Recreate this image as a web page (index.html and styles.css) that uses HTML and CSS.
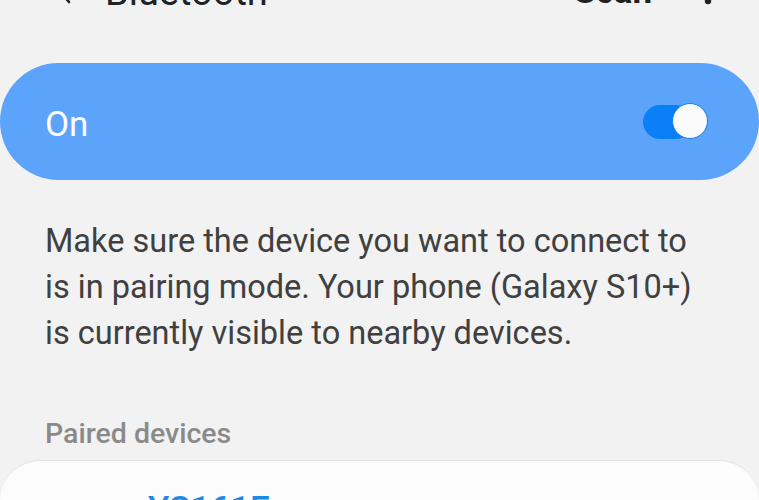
FILE: index.html
```html
<!DOCTYPE html>
<html lang="en">
<head>
    <meta charset="UTF-8">
    <meta name="viewport" content="width=device-width, initial-scale=1.0">
    <title>Bluetooth</title>
    <link rel="stylesheet" href="styles.css">
</head>
<body>
    <div class="topbar">
        <svg class="back" width="20" height="30" viewBox="0 0 20 30">
            <path d="M15 2 L4 15 L15 28" fill="none" stroke="#222" stroke-width="2.6" stroke-linecap="round" stroke-linejoin="round"/>
        </svg>
        <span class="title">Bluetooth</span>
        <span class="spacer"></span>
        <span class="scan">Scan</span>
        <svg class="more" width="8" height="32" viewBox="0 0 8 32">
            <circle cx="4" cy="4" r="3.2" fill="#222"/>
            <circle cx="4" cy="16" r="3.2" fill="#222"/>
            <circle cx="4" cy="28" r="3.2" fill="#222"/>
        </svg>
    </div>

    <div class="master">
        <span class="master-label">On</span>
        <div class="switch">
            <div class="track"></div>
            <div class="knob"></div>
        </div>
    </div>

    <p class="hint">Make sure the device you want to connect to<br>is in pairing mode. Your phone (Galaxy S10+)<br>is currently visible to nearby devices.</p>

    <h3 class="section">Paired devices</h3>

    <div class="card">
        <div class="device">
            <span class="device-name">YS161E</span>
        </div>
    </div>
</body>
</html>
```

FILE: styles.css
```css
body {
    margin: 0;
    background: #f2f2f2;
    font-family: Roboto, "Noto Sans", sans-serif;
    overflow: hidden;
    height: 500px;
}
.topbar {
    display: flex;
    align-items: flex-end;
    height: 38px;
    margin-top: -27px;
    padding: 0 47px 0 54px;
    color: #222;
}
.back {
    margin-bottom: 7px;
}
.title {
    font-size: 38px;
    line-height: 38px;
    margin-left: 31px;
}
.spacer {
    flex: 1;
}
.scan {
    font-size: 35px;
    line-height: 38px;
    font-weight: bold;
    margin-right: 52px;
}
.more {
    margin-bottom: 6px;
}
.master {
    margin-top: 52px;
    height: 117px;
    border-radius: 59px;
    background: #5ca4fb;
    display: flex;
    align-items: center;
    justify-content: space-between;
    padding: 0 51px 0 45px;
}
.master-label {
    color: #fff;
    font-size: 35px;
    line-height: 40px;
    padding-top: 6px;
}
.switch {
    position: relative;
    width: 65px;
    height: 37px;
}
.track {
    position: absolute;
    left: 0;
    top: 2px;
    width: 50px;
    height: 34px;
    border-radius: 17px;
    background: #0b80f6;
}
.knob {
    position: absolute;
    right: 0;
    top: 0;
    width: 34px;
    height: 34px;
    border-radius: 50%;
    background: #fbfbfb;
    border: 1.5px solid #0b80f6;
}
.hint {
    margin: 38px 0 0;
    padding-left: 45px;
    font-size: 32.5px;
    line-height: 46px;
    color: #404040;
    white-space: nowrap;
}
.section {
    margin: 60px 0 8px;
    padding-left: 45px;
    font-size: 28.5px;
    line-height: 36px;
    font-weight: 500;
    color: #8a8a8a;
}
.card {
    background: #fcfcfc;
    border-top: 1px solid #e2e2e2;
    border-radius: 40px 40px 0 0;
    height: 40px;
}
.device {
    padding: 26px 0 0 148px;
}
.device-name {
    font-size: 35px;
    line-height: 46px;
    color: #1d8be6;
    font-weight: 500;
}
```
